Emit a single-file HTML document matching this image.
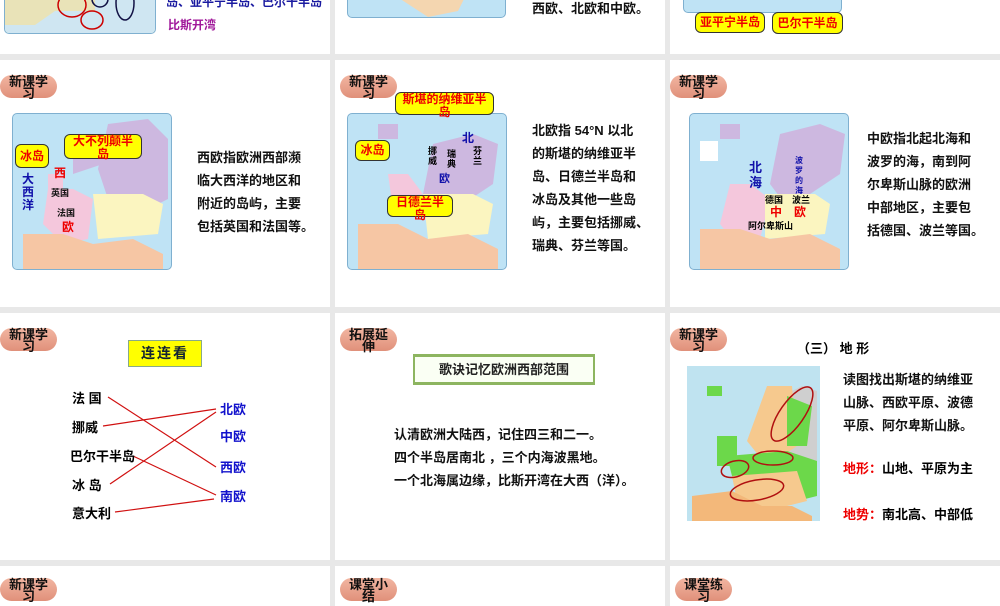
<!DOCTYPE html>
<html><head><meta charset="utf-8"><style>
*{margin:0;padding:0;box-sizing:border-box}
body{width:1000px;height:600px;background:#e8e8e8;position:relative;overflow:hidden;font-family:"Liberation Sans","Noto Sans CJK SC",sans-serif;font-weight:bold}
.s{position:absolute;background:#fff;overflow:hidden}
.a{position:absolute;white-space:nowrap}
.badge{position:absolute;width:57px;height:23px;border-radius:12px;background:linear-gradient(#f2b6a2,#e0907a);font-size:13px;line-height:12px;text-align:center;color:#111;padding-top:1px}
.badge span{display:block;width:42px;margin:0 auto;white-space:normal}
.map{position:absolute;border:1px solid #7fb0d0;border-radius:5px;background:#bfe3f5;overflow:hidden}
.t{position:absolute;font-size:13px;line-height:23px;color:#111;white-space:nowrap}
.bub{position:absolute;background:#ffff00;border:1px solid #333;border-radius:6px;color:#e00;font-size:12px;text-align:center;line-height:13px}
</style></head><body>

<!-- row 1 -->
<div class="s" style="left:0;top:0;width:330px;height:54px">
 <div class="map" style="left:4px;top:-10px;width:152px;height:44px;background:#d8ecd0">
  <svg width="152" height="44"><rect width="152" height="44" fill="#cfe6f2"/><path d="M0 0h90v20h-40l-20 14H0z" fill="#e9e3b8"/><ellipse cx="67" cy="14" rx="14" ry="12" fill="none" stroke="#c00" stroke-width="1.5"/><ellipse cx="87" cy="29" rx="11" ry="9" fill="none" stroke="#c00" stroke-width="1.5"/><ellipse cx="120" cy="12" rx="9" ry="17" fill="none" stroke="#114" stroke-width="1.5"/><ellipse cx="95" cy="8" rx="8" ry="8" fill="none" stroke="#114" stroke-width="1.5"/></svg>
 </div>
 <div class="a" style="left:166px;top:-7px;font-size:12px;color:#1a1aa0">岛、亚平宁半岛、巴尔干半岛</div>
 <div class="a" style="left:168px;top:16px;font-size:12px;color:#a0189a">比斯开湾</div>
</div>
<div class="s" style="left:335px;top:0;width:330px;height:54px">
 <div class="map" style="left:12px;top:-10px;width:159px;height:28px"><svg width="159" height="28"><path d="M40 0h80l-10 20-30 6z" fill="#f4d6b0"/></svg></div>
 <div class="a" style="left:197px;top:-2px;font-size:13px;color:#111">西欧、北欧和中欧。</div>
</div>
<div class="s" style="left:670px;top:0;width:330px;height:54px">
 <div class="map" style="left:13px;top:-10px;width:159px;height:23px"></div>
 <div class="bub" style="left:25px;top:12px;width:70px;height:21px;line-height:19px">亚平宁半岛</div>
 <div class="bub" style="left:102px;top:12px;width:71px;height:22px;line-height:20px">巴尔干半岛</div>
</div>

<!-- row 2 -->
<div class="s" style="left:0;top:60px;width:330px;height:247px">
 <div class="badge" style="left:0;top:15px"><span>新课学习</span></div>
 <div class="map" style="left:12px;top:53px;width:160px;height:157px">
  <svg width="160" height="157"><path d="M95 10l40-5 20 20v60l-20 10-40-10-10-30z" fill="#cdb8e0"/><path d="M60 20l25 0 5 30-30 10z" fill="#cdb8e0"/><path d="M35 75h25l20 10-5 40-25 5-20-20z" fill="#f4c7dc"/><path d="M80 80h50l20 10-5 30-60 5z" fill="#fbf5c0"/><path d="M10 120l40 0 30 10 40-5 30 15v20H10z" fill="#f6c6a4"/><path d="M35 60h15v20H35z" fill="#f4c7dc"/></svg>
 </div>
 <div class="bub" style="left:15px;top:84px;width:34px;height:24px;line-height:22px">冰岛</div>
 <div class="bub" style="left:64px;top:74px;width:78px;height:25px">大不列颠半<br>岛</div>
 <div class="a" style="left:22px;top:113px;font-size:12px;line-height:13px;color:#11a;white-space:normal;width:13px">大西洋</div>
 <div class="a" style="left:54px;top:104px;font-size:12px;color:#e00">西</div>
 <div class="a" style="left:51px;top:126px;font-size:9px;color:#111">英国</div>
 <div class="a" style="left:57px;top:146px;font-size:9px;color:#111">法国</div>
 <div class="a" style="left:62px;top:158px;font-size:12px;color:#e00">欧</div>
 <div class="t" style="left:197px;top:86px">西欧指欧洲西部濒<br>临大西洋的地区和<br>附近的岛屿，主要<br>包括英国和法国等。</div>
</div>
<div class="s" style="left:335px;top:60px;width:330px;height:247px">
 <div class="badge" style="left:5px;top:15px"><span>新课学习</span></div>
 <div class="map" style="left:12px;top:53px;width:160px;height:157px">
  <svg width="160" height="157"><path d="M85 30l40-10 25 10-5 40-30 20-25 10-15-20z" fill="#cdb8e0"/><path d="M30 10h20v15H30z" fill="#cdb8e0"/><path d="M40 60h20l15 20-30 15z" fill="#f4c7dc"/><path d="M75 80h50l20 10-5 30-60 5z" fill="#fbf5c0"/><path d="M10 110h40l30 15 40-5 30 15v22H10z" fill="#f6c6a4"/></svg>
 </div>
 <div class="bub" style="left:60px;top:32px;width:99px;height:23px">斯堪的纳维亚半<br>岛</div>
 <div class="bub" style="left:20px;top:80px;width:35px;height:21px;line-height:19px">冰岛</div>
 <div class="bub" style="left:52px;top:135px;width:66px;height:22px">日德兰半<br>岛</div>
 <div class="a" style="left:127px;top:69px;font-size:12px;color:#11a">北</div>
 <div class="a" style="left:138px;top:86px;font-size:9px;line-height:10px;white-space:normal;width:10px">芬兰</div>
 <div class="a" style="left:93px;top:86px;font-size:9px;line-height:10px;white-space:normal;width:10px">挪威</div>
 <div class="a" style="left:112px;top:89px;font-size:9px;line-height:10px;white-space:normal;width:10px">瑞典</div>
 <div class="a" style="left:104px;top:110px;font-size:11px;color:#11a">欧</div>
 <div class="t" style="left:197px;top:59px">北欧指 54°N 以北<br>的斯堪的纳维亚半<br>岛、日德兰半岛和<br>冰岛及其他一些岛<br>屿，主要包括挪威、<br>瑞典、芬兰等国。</div>
</div>
<div class="s" style="left:670px;top:60px;width:330px;height:247px">
 <div class="badge" style="left:0;top:15px"><span>新课学习</span></div>
 <div class="map" style="left:19px;top:53px;width:160px;height:157px">
  <svg width="160" height="157"><path d="M90 20l40-10 25 10-5 40-30 20-25 10-15-20z" fill="#cdb8e0"/><path d="M30 10h20v15H30z" fill="#cdb8e0"/><rect x="10" y="27" width="18" height="20" fill="#fff"/><path d="M40 70h20l20 15-10 40-25 5-15-20z" fill="#f4c7dc"/><path d="M75 80h50l15 10-5 30-60 5z" fill="#fbf5c0"/><path d="M10 115h40l30 10 40-5 30 15v22H10z" fill="#f6c6a4"/></svg>
 </div>
 <div class="a" style="left:79px;top:100px;font-size:13px;line-height:15px;color:#11a;white-space:normal;width:14px">北海</div>
 <div class="a" style="left:125px;top:96px;font-size:8px;line-height:10px;color:#11a;white-space:normal;width:9px">波罗的海</div>
 <div class="a" style="left:95px;top:133px;font-size:9px">德国</div>
 <div class="a" style="left:122px;top:133px;font-size:9px">波兰</div>
 <div class="a" style="left:100px;top:143px;font-size:12px;color:#e00">中</div>
 <div class="a" style="left:124px;top:143px;font-size:12px;color:#e00">欧</div>
 <div class="a" style="left:78px;top:159px;font-size:9px">阿尔卑斯山</div>
 <div class="t" style="left:197px;top:67px">中欧指北起北海和<br>波罗的海，南到阿<br>尔卑斯山脉的欧洲<br>中部地区，主要包<br>括德国、波兰等国。</div>
</div>

<!-- row 3 -->
<div class="s" style="left:0;top:313px;width:330px;height:247px">
 <div class="badge" style="left:0;top:15px"><span>新课学习</span></div>
 <div class="a" style="left:128px;top:27px;width:74px;height:27px;background:#ffff00;border:1px solid #8a8;font-size:14px;line-height:25px;text-align:center;color:#123;letter-spacing:2px">连连看</div>
 <svg class="a" style="left:0;top:0" width="330" height="247"><g stroke="#d01010" stroke-width="1.2"><line x1="108" y1="84" x2="216" y2="154"/><line x1="103" y1="113" x2="216" y2="96"/><line x1="133" y1="143" x2="216" y2="182"/><line x1="110" y1="171" x2="216" y2="99"/><line x1="115" y1="199" x2="214" y2="186"/></g></svg>
 <div class="a" style="left:72px;top:75px;font-size:13px">法 国</div>
 <div class="a" style="left:72px;top:104px;font-size:13px">挪威</div>
 <div class="a" style="left:70px;top:133px;font-size:13px">巴尔干半岛</div>
 <div class="a" style="left:72px;top:162px;font-size:13px">冰 岛</div>
 <div class="a" style="left:72px;top:190px;font-size:13px">意大利</div>
 <div class="a" style="left:220px;top:86px;font-size:13px;color:#11c">北欧</div>
 <div class="a" style="left:220px;top:113px;font-size:13px;color:#11c">中欧</div>
 <div class="a" style="left:220px;top:144px;font-size:13px;color:#11c">西欧</div>
 <div class="a" style="left:220px;top:173px;font-size:13px;color:#11c">南欧</div>
</div>
<div class="s" style="left:335px;top:313px;width:330px;height:247px">
 <div class="badge" style="left:5px;top:15px"><span>拓展延伸</span></div>
 <div class="a" style="left:78px;top:41px;width:182px;height:31px;border:3px solid #8db560;border-left-width:2px;border-right-width:2px;background:#fafff4;font-size:13px;line-height:25px;text-align:center;color:#222">歌诀记忆欧洲西部范围</div>
 <div class="t" style="left:59px;top:110px">认清欧洲大陆西，记住四三和二一。<br>四个半岛居南北 ，三个内海波黑地。<br>一个北海属边缘，比斯开湾在大西（洋）。</div>
</div>
<div class="s" style="left:670px;top:313px;width:330px;height:247px">
 <div class="badge" style="left:0;top:15px"><span>新课学习</span></div>
 <div class="a" style="left:127px;top:25px;font-size:13px">（三） 地 形</div>
 <div class="a" style="left:17px;top:53px;width:133px;height:171px;background:#bfe3f0">
  <svg width="133" height="171"><path d="M95 30l20-10 15 5v90h-35z" fill="#cfcfcf"/><path d="M80 20l25 0 5 60-30 20-20-25z" fill="#f6c98e"/><path d="M100 30l25 10-5 40-20 0z" fill="#6cd84a"/><path d="M30 70h20v30H30z" fill="#6cd84a"/><path d="M40 90l60-5 30 10v35l-40 10-40-10z" fill="#6cd84a"/><path d="M45 110l65-5 10 30-40 10-30-10z" fill="#f6c98e"/><path d="M5 130l40-5 30 15 30 0 20 10v21H5z" fill="#f3b87a"/><path d="M20 20h15v10H20z" fill="#6cd84a"/><rect x="0" y="155" width="133" height="16" fill="#fff"/><g fill="none" stroke="#b01010" stroke-width="1.5"><ellipse cx="105" cy="48" rx="12" ry="32" transform="rotate(35 105 48)"/><ellipse cx="48" cy="103" rx="14" ry="8" transform="rotate(-15 48 103)"/><ellipse cx="86" cy="92" rx="20" ry="7"/><ellipse cx="70" cy="124" rx="27" ry="10" transform="rotate(-10 70 124)"/></g></svg>
 </div>
 <div class="t" style="left:173px;top:55px">读图找出斯堪的纳维亚<br>山脉、西欧平原、波德<br>平原、阿尔卑斯山脉。</div>
 <div class="a" style="left:173px;top:145px;font-size:13px"><span style="color:#e00">地形：</span>山地、平原为主</div>
 <div class="a" style="left:173px;top:191px;font-size:13px"><span style="color:#e00">地势：</span>南北高、中部低</div>
</div>

<!-- row 4 -->
<div class="s" style="left:0;top:566px;width:330px;height:40px"><div class="badge" style="left:0;top:12px"><span>新课学习</span></div></div>
<div class="s" style="left:335px;top:566px;width:330px;height:40px"><div class="badge" style="left:5px;top:12px"><span>课堂小结</span></div></div>
<div class="s" style="left:670px;top:566px;width:330px;height:40px"><div class="badge" style="left:5px;top:12px"><span>课堂练习</span></div></div>
</body></html>
